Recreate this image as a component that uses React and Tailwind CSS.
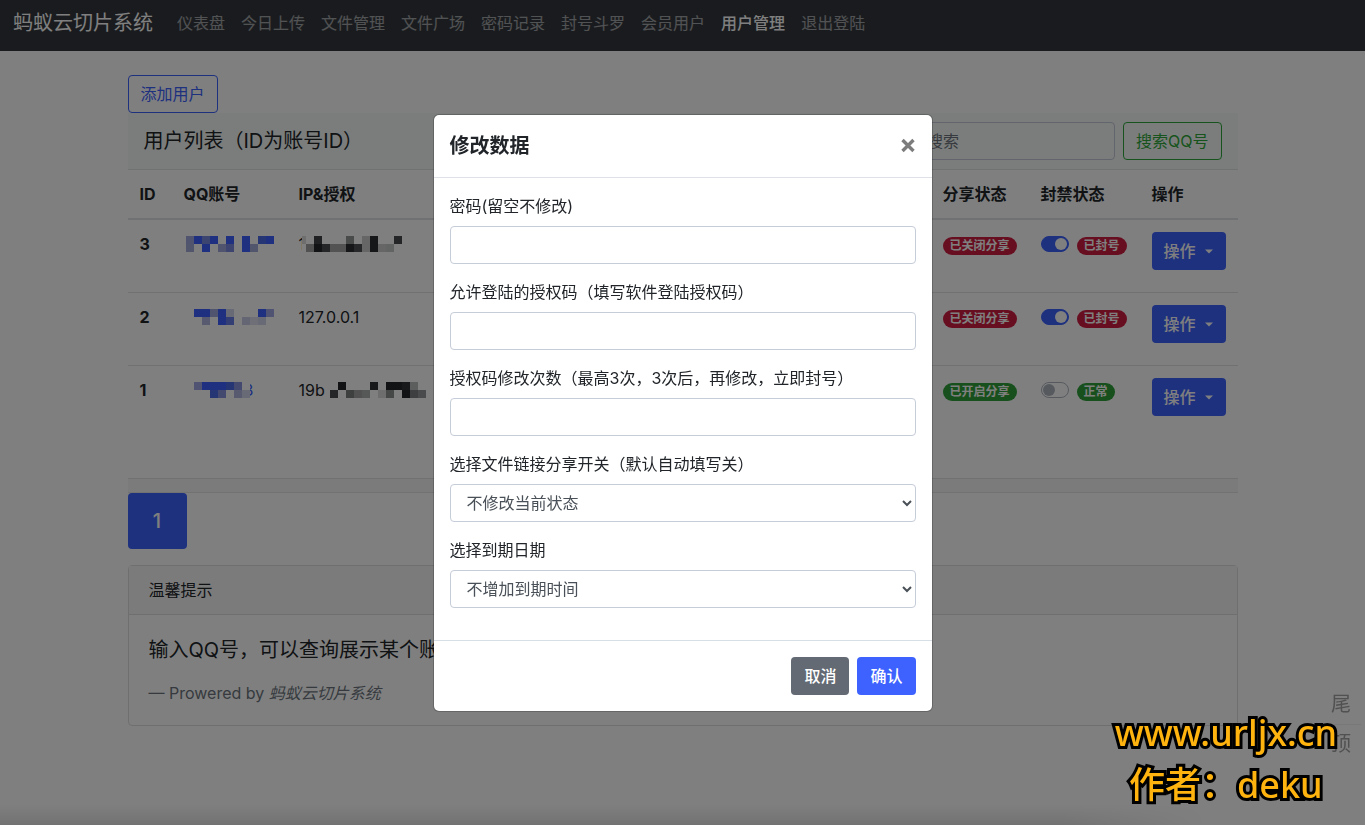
import React from "react";

const navLinks = [
  "仪表盘",
  "今日上传",
  "文件管理",
  "文件广场",
  "密码记录",
  "封号斗罗",
  "会员用户",
  "用户管理",
  "退出登陆",
];

// masked values: each block is [column, row, colour] on an 8px grid
const users = [
  {
    id: 3,
    qq: [[0, 0, "#a0a8dc"], [1, 0, "#3c60ff"], [2, 0, "#7888e0"], [3, 0, "#3c60ff"], [5, 0, "#3c60ff"], [7, 0, "#3c60ff"], [9, 0, "#4c6ce8"], [10, 0, "#3c60ff"],
      [0, 1, "#a4acd8"], [2, 1, "#3c60ff"], [4, 1, "#a0a8dc"], [5, 1, "#7c88e0"], [7, 1, "#3c60ff"], [8, 1, "#a4acd8"]],
    qqShift: 2,
    prefix: "1",
    ip: [[-0.5, 0, "#dcdcdc"], [-0.5, 1, "#ffffff"], [0, 0, "#ffffff"], [1, 0, "#404244"], [5, 0, "#929494"], [7, 0, "#cccccc"], [8, 0, "#2c2e30"], [11, 0, "#484a4c"],
      [0, 1, "#a0a2a0"], [1, 1, "#242628"], [2, 1, "#484c4e"], [3, 1, "#a4a6a4"], [4, 1, "#a4a6a4"], [5, 1, "#2c2e30"], [6, 1, "#4c5052"], [7, 1, "#cccccc"], [8, 1, "#2c2e30"], [9, 1, "#cccccc"], [10, 1, "#c4c8c6"]],
    ipShift: 7,
    shared: false,
    banned: true,
  },
  {
    id: 2,
    qq: [[0, 0, "#3c60ff"], [1, 0, "#3c60ff"], [2, 0, "#a0a8dc"], [3, 0, "#3c60ff"], [4, 0, "#d0d4ea"], [8, 0, "#3c60ff"], [9, 0, "#a0a8e4"],
      [1, 1, "#b0b6e0"], [3, 1, "#3c60ff"], [4, 1, "#647ce8"], [6, 1, "#c8cce8"], [7, 1, "#dcdeee"], [8, 1, "#d0d4ea"]],
    qqShift: 10,
    prefix: "127.0.0.1",
    ip: [],
    ipShift: 0,
    shared: false,
    banned: true,
  },
  {
    id: 1,
    qq: [[0, 0, "#a0a8e4"], [1, 0, "#3c60ff"], [2, 0, "#3c60ff"], [3, 0, "#3c60ff"], [4, 0, "#4c6ce8"], [5, 0, "#8892e0"],
      [2, 1, "#4c6ce8"], [3, 1, "#8892e0"], [5, 1, "#b0b6e0"], [6, 1, "#d0d4ea"]],
    qqShift: 10,
    qqSuffix: true,
    prefix: "19b",
    ip: [[1, 0, "#242628"], [5, 0, "#303234"], [7, 0, "#242628"], [8, 0, "#242628"], [9, 0, "#303234"], [10, 0, "#b8bcba"],
      [0, 1, "#484c4e"], [2, 1, "#7c807e"], [3, 1, "#a0a2a0"], [4, 1, "#acb0ae"], [6, 1, "#dcdcdc"], [7, 1, "#8c908e"], [9, 1, "#242628"], [10, 1, "#7c7e80"], [11, 1, "#949698"]],
    ipShift: 31,
    shared: true,
    banned: false,
    tall: true,
  },
];

const fields = [
  { id: "password", label: "密码(留空不修改)" },
  { id: "code", label: "允许登陆的授权码（填写软件登陆授权码）" },
  { id: "times", label: "授权码修改次数（最高3次，3次后，再修改，立即封号）" },
  { id: "share", label: "选择文件链接分享开关（默认自动填写关）", options: ["不修改当前状态", "开启分享", "关闭分享"] },
  { id: "expire", label: "选择到期日期", options: ["不增加到期时间", "一个月", "一年"] },
];

function Mosaic({ cells, cols }) {
  return (
    <svg
      width={cols * 8}
      height="16"
      className="block shrink-0 overflow-visible"
      shapeRendering="crispEdges"
      aria-hidden="true"
    >
      {cells.map(([x, y, fill]) => (
        <rect key={`${x}-${y}`} x={x * 8} y={y * 8} width="8" height="8" fill={fill} />
      ))}
    </svg>
  );
}

function Badge({ good, children }) {
  return (
    <span
      className={`mt-px inline-flex h-[18px] items-center rounded-full px-[7px] text-xs leading-3 font-bold text-white ${
        good ? "bg-[#2fa038]" : "bg-[#cf1c40]"
      }`}
    >
      {children}
    </span>
  );
}

function Switch({ id, checked }) {
  return (
    <input
      id={id}
      type="checkbox"
      role="switch"
      aria-label="封禁状态"
      defaultChecked={checked}
      className="relative h-4 w-7 shrink-0 appearance-none rounded-full border border-[#adb5bd] bg-white before:absolute before:top-px before:left-px before:size-3 before:rounded-full before:bg-[#adb5bd] checked:border-[#3d62ff] checked:bg-[#3d62ff] checked:before:left-[13px] checked:before:bg-white"
    />
  );
}

function Navbar() {
  return (
    <nav className="flex items-center bg-[#33373d] px-[13px] pt-[3px] pb-2">
      <a href="#" className="mr-4 py-[5px] text-xl leading-[30px] whitespace-nowrap text-white">
        蚂蚁云切片系统
      </a>
      <ul className="flex">
        {navLinks.map((text) => (
          <li key={text}>
            <a
              href="#"
              className={`block px-2 py-2 whitespace-nowrap ${
                text === "用户管理" ? "font-medium text-white" : "text-white/55"
              }`}
            >
              {text}
            </a>
          </li>
        ))}
      </ul>
    </nav>
  );
}

function UserTable() {
  return (
    <table className="w-full table-fixed border-separate border-spacing-0 text-left">
      <colgroup>
        <col className="w-11" />
        <col className="w-[115px]" />
        <col />
        <col className="w-[98px]" />
        <col className="w-[111px]" />
        <col className="w-[98px]" />
      </colgroup>
      <thead>
        <tr className="whitespace-nowrap">
          {["ID", "QQ账号", "IP&授权", "分享状态", "封禁状态", "操作"].map((text) => (
            <th key={text} scope="col" className="border-b-2 border-[#dee2e6] p-3 font-bold">
              {text}
            </th>
          ))}
        </tr>
      </thead>
      <tbody>
        {users.map((user) => (
          <tr
            key={user.id}
            className={`align-top *:border-b *:border-[#dee2e6] *:p-3 ${user.tall ? "h-[113px]" : "h-[73px]"}`}
          >
            <th scope="row" className="font-bold">{user.id}</th>
            <td>
              <div className="flex h-6 items-center" style={{ paddingLeft: user.qqShift }}>
                <Mosaic cells={user.qq} cols={user.qqSuffix ? 7 : 11} />
                {user.qqSuffix && (
                  <span className="flex w-1 justify-end overflow-hidden text-[#3d62ff]">3</span>
                )}
              </div>
            </td>
            <td>
              <div className="relative flex h-6 items-center whitespace-nowrap">
                {user.prefix}
                {user.ip.length > 0 && (
                  <span className="absolute top-1" style={{ left: user.ipShift }}>
                    <Mosaic cells={user.ip} cols={12} />
                  </span>
                )}
              </div>
            </td>
            <td>
              <div className="flex h-[26px] items-start pt-1">
                <Badge good={user.shared}>{user.shared ? "已开启分享" : "已关闭分享"}</Badge>
              </div>
            </td>
            <td>
              <div className="flex h-[26px] items-start gap-2 pt-1">
                <Switch id={`ban-${user.id}`} checked={user.banned} />
                <Badge good={!user.banned}>{user.banned ? "已封号" : "正常"}</Badge>
              </div>
            </td>
            <td>
              <button
                type="button"
                className="flex h-[38px] w-[74px] items-center justify-between rounded bg-[#3d62ff] px-3 font-medium whitespace-nowrap text-white"
              >
                操作
                <svg width="10" height="5" viewBox="0 0 10 5" fill="currentColor" aria-hidden="true">
                  <path d="M1 0.5h8L5 4.5z" />
                </svg>
              </button>
            </td>
          </tr>
        ))}
      </tbody>
    </table>
  );
}

function EditModal() {
  return (
    <div className="fixed inset-0 flex items-center justify-center bg-black/50">
      <form
        role="dialog"
        aria-labelledby="edit-title"
        className="w-[500px] max-w-full rounded-md border border-black/20 bg-white bg-clip-padding"
      >
        <header className="flex items-center justify-between border-b border-[#dee2e6] p-4">
          <h2 id="edit-title" className="text-xl leading-[30px] font-semibold">修改数据</h2>
          <button type="button" aria-label="关闭" className="text-[#7c7c7c]">
            <svg width="16" height="16" viewBox="0 0 16 16" fill="none" stroke="currentColor" strokeWidth="3.4" aria-hidden="true">
              <path d="M2.5 2l11 11M13.5 2l-11 11" />
            </svg>
          </button>
        </header>
        <div className="flex flex-col gap-4 px-4 pt-4 pb-8">
          {fields.map((field) => (
            <div key={field.id} className="flex flex-col gap-2">
              <label htmlFor={field.id}>{field.label}</label>
              {field.options ? (
                <select
                  id={field.id}
                  className="h-[38px] w-full rounded border border-[#c5cdd8] bg-white px-3 text-[#495057]"
                >
                  {field.options.map((option) => (
                    <option key={option}>{option}</option>
                  ))}
                </select>
              ) : (
                <input
                  id={field.id}
                  type={field.id === "password" ? "password" : "text"}
                  className="h-[38px] w-full rounded border border-[#c5cdd8] px-3 text-[#495057]"
                />
              )}
            </div>
          ))}
        </div>
        <footer className="flex justify-end gap-2 border-t border-[#d8dee6] p-4">
          <button type="button" className="h-[38px] rounded bg-[#636a73] px-[13px] font-medium text-white">取消</button>
          <button type="submit" className="h-[38px] rounded bg-[#3d62ff] px-[13px] font-medium text-white">确认</button>
        </footer>
      </form>
    </div>
  );
}

function App() {
  return (
    <div className="min-h-screen bg-white font-['Inter','Noto_Sans_CJK_SC',sans-serif] text-base leading-6 text-[#212529]">
      <Navbar />
      <main className="mx-auto max-w-[1140px] px-[15px] pt-6">
        <button
          type="button"
          className="block h-[38px] rounded border border-[#3d62ff] px-3 text-[#3d62ff]"
        >
          添加用户
        </button>
        <section>
          <div className="flex h-[57px] items-center justify-between border-b border-[#dee2e6] bg-[#f6faf8] px-4">
            <h1 className="text-xl leading-[30px]">用户列表（ID为账号ID）</h1>
            <form className="flex gap-2">
              <input
                type="search"
                aria-label="搜索"
                placeholder="搜索"
                className="h-[38px] w-[201px] rounded border border-[#c5cdd8] px-3 placeholder:text-[#6c757d]"
              />
              <button
                type="submit"
                className="h-[38px] rounded border border-[#2fa83a] px-3 whitespace-nowrap text-[#2fa83a]"
              >
                搜索QQ号
              </button>
            </form>
          </div>
          <UserTable />
          <div className="h-3.5 border-b border-[#e4e4e4] bg-[#f7f7f7]" />
        </section>
        <a
          href="#"
          aria-current="page"
          className="flex h-14 w-[59px] items-center justify-center rounded bg-[#3d62ff] text-xl font-medium text-white"
        >
          1
        </a>
        <section className="mt-4 rounded border border-[#dfdfdf]">
          <h2 className="border-b border-[#dfdfdf] bg-[#f7f7f7] px-5 py-3">温馨提示</h2>
          <div className="p-5">
            <p className="mb-4 text-xl leading-[30px]">输入QQ号，可以查询展示某个账号的信息</p>
            <footer className="text-[#6c757d]">
              — Prowered by <cite className="italic">蚂蚁云切片系统</cite>
            </footer>
          </div>
        </section>
      </main>
      <div className="fixed right-1 bottom-[61px] flex w-10 flex-col text-center text-xl leading-[39px] text-[#a2a2a2]">
        <a href="#bottom" className="border-b border-[#f0f0f0]">尾</a>
        <a href="#top">顶</a>
      </div>
      <EditModal />
      <div className="pointer-events-none fixed right-40 bottom-0 left-0 h-5 bg-linear-to-t from-black/10 to-transparent [mask-image:linear-gradient(to_right,#000_88%,transparent)]" />
      <div className="pointer-events-none fixed right-7 bottom-[14px] text-center font-['Noto_Sans','Noto_Sans_CJK_SC',sans-serif] text-4xl leading-[52px] font-medium text-[#ffb30f] [-webkit-text-stroke:6px_#000] [paint-order:stroke_fill]">
        <p>www.urljx.cn</p>
        <p>作者：deku</p>
      </div>
    </div>
  );
}

export default App;
